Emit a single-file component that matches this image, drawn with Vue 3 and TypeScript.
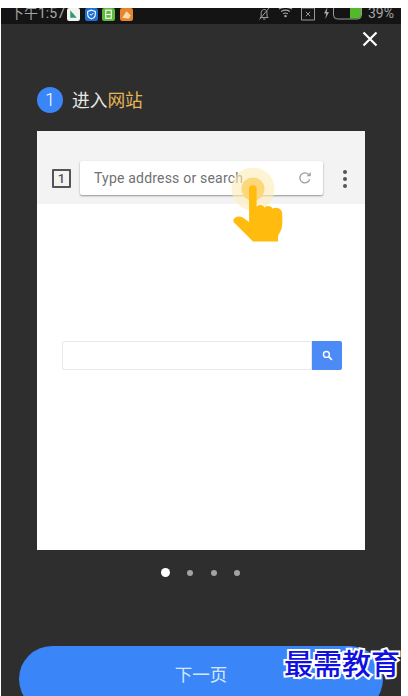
<script setup lang="ts">
const dots = [true, false, false, false]
</script>

<template>
  <div class="page">
    <div class="screen">
      <div class="status">
        <div class="status-left">
          <span class="time">下午1:57</span>
          <svg class="app" viewBox="0 0 12 12"><rect width="12" height="12" rx="2" fill="#f4f4f4"/><path d="M3 2l6 7H3z" fill="#2f9d6a"/></svg>
          <svg class="app" viewBox="0 0 12 12"><rect width="12" height="12" rx="2" fill="#1f6fd8"/><path d="M6 2l3.500 1.200V6c0 2-1.600 3.400-3.500 4-1.900-.6-3.500-2-3.500-4V3.200z" fill="none" stroke="#fff" stroke-width="1"/><path d="M4.500 5.500l1.200 1.200 2-2" fill="none" stroke="#fff" stroke-width=".9"/></svg>
          <svg class="app" viewBox="0 0 12 12"><rect width="12" height="12" rx="2" fill="#62b93f"/><rect x="3.500" y="2" width="5" height="7.500" fill="none" stroke="#fff"/><path d="M4 6h4" stroke="#fff"/></svg>
          <svg class="app" viewBox="0 0 12 12"><rect width="12" height="12" rx="2" fill="#e8842c"/><path d="M2 9l4-6 4 4-2 3z" fill="#f8d9b0"/></svg>
        </div>
        <div class="status-right">
          <svg class="sicon bell" viewBox="0 0 14 14"><path d="M3 10.500h8.500M4.200 10.500V5.500a3 3 0 0 1 5.600-1.500l.4 6.500M6 12h2.500M2.500 12.500L12 1" fill="none" stroke="#9a9a9a" stroke-width="1"/></svg>
          <svg class="sicon wifi" viewBox="0 0 16 12"><path d="M1 1.800c4-2.400 10-2.400 14 0M3.300 4.300c2.800-1.700 6.600-1.700 9.400 0M5.500 6.800c1.500-.9 3.500-.9 5 0" fill="none" stroke="#a8a8a8" stroke-width="1.200"/><circle cx="8" cy="9.300" r="1.300" fill="#b0b0b0"/></svg>
          <svg class="sicon sim" viewBox="0 0 14 14"><path d="M.5 1h13v12H.5z" fill="none" stroke="#9a9a9a"/><path d="M4.800 4.800l4.400 4.400M9.200 4.800L4.800 9.200" stroke="#9a9a9a"/></svg>
          <svg class="sicon bolt" viewBox="0 0 7 12"><path d="M4.500 0L1 6.500h2.200L2.300 12 6 5H3.700z" fill="#a8a8a8"/></svg>
          <svg class="batt" viewBox="0 0 30 13"><rect x=".5" y="-3" width="28" height="15" rx="4" fill="none" stroke="#9a9a9a"/><path d="M17 0h11v7.500a4 4 0 0 1-4 4h-7z" fill="#52b82c"/></svg>
          <span class="pct">39%</span>
        </div>
      </div>

      <div class="close-row">
        <svg class="close" viewBox="0 0 16 16"><path d="M1.500 1.500l13 13M14.500 1.500l-13 13" stroke="#fff" stroke-width="2.200"/></svg>
      </div>

      <div class="step">
        <span class="num">1</span>
        <span class="step-text">进入<em>网站</em></span>
      </div>

      <div class="card">
        <div class="toolbar">
          <span class="tab">1</span>
          <div class="omni">
            <span class="omni-text">Type address or search</span>
            <svg class="reload" viewBox="0 0 14 14"><path d="M11.700 8.300A5 5 0 1 1 10.500 3.400" fill="none" stroke="#9e9e9e" stroke-width="1.300"/><path d="M8.500 5.300h4.200V1.100z" fill="#9e9e9e"/></svg>
          </div>
          <div class="menu"><i></i><i></i><i></i></div>
        </div>
        <div class="body">
          <div class="search">
            <div class="input"></div>
            <div class="go">
              <svg viewBox="0 0 12 12"><circle cx="4.800" cy="4.800" r="3.200" fill="none" stroke="#fff" stroke-width="1.500"/><path d="M7.300 7.300l3.500 3.500" stroke="#fff" stroke-width="1.800"/></svg>
            </div>
          </div>
        </div>
        <svg class="hand" viewBox="0 0 56 84">
          <circle cx="22" cy="21" r="21.500" fill="#fdeeb8" fill-opacity=".62"/>
          <circle cx="22" cy="21" r="11.500" fill="#fdd779"/>
          <path d="M18 21a3.800 3.800 0 0 1 7.600 0v18c1.200-2.800 6.800-2.800 8 .7 1.500-2.500 6.800-2.300 8 1 2.200-2 8.400-1 9.400 3.300 0 0 .8 6 0 14.500-.3 3.500-2.500 6-4 9.500v5.500H22L4 55.500c-2-2-2.300-3.400-.7-5 2.700-2.700 6-2.500 8.800-.7l6 4.200z" fill="#ffbb0e"/>
        </svg>
      </div>

      <div class="dots">
        <span v-for="(on, i) in dots" :key="i" :class="['dot', { on }]"></span>
      </div>

      <div class="next">下一页</div>
    </div>
    <div class="mark">最需教育</div>
  </div>
</template>

<style>
html, body { margin: 0; background: #fff; }
</style>

<style scoped>
.page {
  position: relative;
  width: 408px;
  height: 696px;
  box-sizing: border-box;
  padding: 8px 7px 0 1px;
  background: #fff;
  overflow: hidden;
  font-family: "Roboto", "Noto Sans CJK SC", sans-serif;
}
.screen {
  height: 688px;
  background: #2e2e2e;
  display: flex;
  flex-direction: column;
  overflow: hidden;
}
.status {
  height: 16px;
  flex: none;
  background: #141414;
  display: flex;
  justify-content: space-between;
  align-items: flex-start;
  overflow: hidden;
  padding: 0 7px 0 9px;
}
.status-left, .status-right { display: flex; align-items: center; height: 16px; margin-top: -3px; }
.time { font-size: 14px; line-height: 16px; color: #a6a6a6; width: 57px; white-space: nowrap; }
.app { width: 13px; height: 13px; margin-right: 4.700px; margin-top: 2px; }
.sicon { flex: none; }
.bell { width: 14px; height: 14px; margin-right: 7px; margin-top: 1px; }
.wifi { width: 15px; height: 12px; margin-right: 8px; margin-top: -1px; }
.sim { width: 14px; height: 14px; margin-right: 8px; margin-top: 1px; }
.bolt { width: 7px; height: 12px; margin-right: 3px; }
.batt { width: 30px; height: 13px; margin-right: 5px; margin-top: 1px; }
.pct { font-size: 14px; line-height: 16px; color: #a6a6a6; }
.close-row {
  flex: none;
  height: 30px;
  display: flex;
  justify-content: flex-end;
  align-items: flex-start;
  padding: 7px 23px 0 0;
  box-sizing: border-box;
}
.close { width: 16px; height: 16px; }
.step {
  margin: 30px 0 0 36px;
  height: 32px;
  flex: none;
  display: flex;
  align-items: center;
  gap: 9px;
}
.num {
  width: 26px;
  height: 26px;
  border-radius: 50%;
  background: #3a86f8;
  color: #fff;
  font-size: 18px;
  line-height: 26px;
  text-align: center;
  font-weight: 300;
}
.step-text { color: #e8e8e8; font-size: 17.700px; line-height: 24px; padding-top: 1px; }
.step-text em { font-style: normal; color: #e6b657; }
.card {
  position: relative;
  flex: none;
  margin: 15px 0 0 36px;
  width: 328px;
  height: 419px;
  background: #fff;
  display: flex;
  flex-direction: column;
}
.toolbar {
  height: 73px;
  flex: none;
  box-sizing: border-box;
  background: #f3f3f3;
  padding: 30px 0 0 15px;
  display: flex;
  align-items: flex-start;
}
.tab {
  width: 19px;
  height: 19px;
  margin-top: 8px;
  box-sizing: border-box;
  border: 2px solid #555;
  border-radius: 1px;
  color: #555;
  font: 500 13px/15px "Roboto", sans-serif;
  text-align: center;
}
.omni {
  width: 243px;
  height: 34px;
  margin-left: 9px;
  box-sizing: border-box;
  background: #fff;
  border-radius: 2px;
  box-shadow: 0 1px 2px rgba(0, 0, 0, .4);
  display: flex;
  align-items: center;
  justify-content: space-between;
  padding: 0 11px 0 14px;
}
.omni-text { font-size: 14px; color: #717171; letter-spacing: .2px; white-space: nowrap; }
.reload { width: 14px; height: 14px; }
.menu {
  margin: 9px 0 0 20px;
  display: flex;
  flex-direction: column;
  gap: 3px;
}
.menu i { width: 4px; height: 4px; border-radius: 50%; background: #555; display: block; }
.body {
  flex: 1;
  padding: 137px 23px 0 25px;
}
.search { display: flex; height: 29px; }
.input {
  width: 250px;
  box-sizing: border-box;
  border: 1px solid #e8e8ea;
  border-radius: 2px 0 0 2px;
  background: #fff;
}
.go {
  width: 30px;
  background: #4c8bf5;
  border-radius: 0 2px 2px 0;
  display: flex;
  align-items: center;
  justify-content: center;
}
.go svg { width: 11px; height: 11px; }
.hand {
  position: absolute;
  left: 194px;
  top: 37px;
  width: 56px;
  height: 84px;
}
.dots {
  flex: none;
  margin: 18px 0 0 160px;
  display: flex;
  align-items: center;
  height: 9px;
}
.dot {
  width: 6px;
  height: 6px;
  border-radius: 50%;
  background: #a3a3a3;
  margin-right: 17.500px;
}
.dot.on { width: 9px; height: 9px; background: #fff; margin-right: 17px; }
.next {
  flex: none;
  margin: 69px 0 0 18px;
  width: 364px;
  height: 66px;
  border-radius: 33px;
  background: #3a86f8;
  color: #d6e6fd;
  font-size: 17.500px;
  line-height: 59px;
  text-align: center;
}
.mark {
  position: absolute;
  left: 284px;
  top: 645px;
  font-family: "Noto Sans CJK SC", serif;
  font-size: 29px;
  font-weight: 500;
  line-height: 34px;
  color: #1010e0;
  white-space: nowrap;
  -webkit-text-stroke: 4px #fff;
  paint-order: stroke fill;
}
</style>
